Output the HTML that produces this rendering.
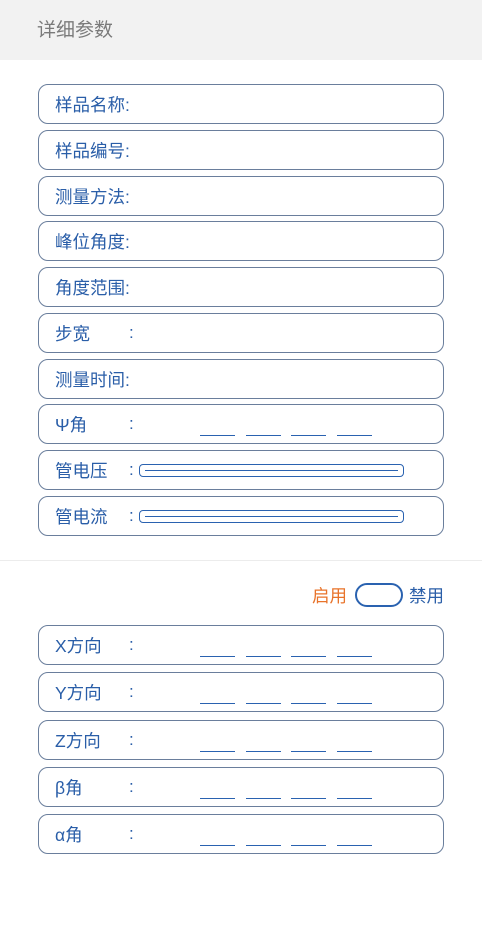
<!DOCTYPE html>
<html><head><meta charset="utf-8"><style>
*{margin:0;padding:0;box-sizing:border-box}
body{width:482px;height:951px;background:#fff;position:relative;overflow:hidden;font-family:"Liberation Sans","Noto Sans CJK SC",sans-serif}
.hd{position:absolute;left:0;top:0;width:482px;height:60px;background:#f2f2f2}
.hd span{position:absolute;left:37px;top:20px;font-size:19px;line-height:22px;color:#7a7a7a}
.row{position:absolute;left:38px;width:406px;height:40px;border:1px solid #6a7e9c;border-radius:10px}
.lb{position:absolute;left:16px;top:9px;font-size:17.5px;line-height:22px;color:#2a5ea8;white-space:nowrap}
.co{position:absolute;left:90px;top:8px;font-size:17px;line-height:22px;color:#2a5ea8}
.u{position:absolute;top:30px;width:35px;height:1px;background:#2a62b0}
.box{position:absolute;left:100px;top:13px;width:265px;height:13px;border:1.5px solid #2a62b0;border-radius:4px}
.box:after{content:"";position:absolute;left:5px;right:5px;top:4.5px;height:1px;background:#2a62b0}
.sep{position:absolute;left:0;top:560px;width:482px;height:1px;background:#ececec}
.t{position:absolute;top:585px;font-size:17.5px;line-height:22px}
</style></head><body>
<div class="hd"><span>详细参数</span></div>

<div class="row" style="top:84px"><span class="lb">样品名称:</span></div>
<div class="row" style="top:130px"><span class="lb">样品编号:</span></div>
<div class="row" style="top:176px"><span class="lb">测量方法:</span></div>
<div class="row" style="top:221px"><span class="lb">峰位角度:</span></div>
<div class="row" style="top:267px"><span class="lb">角度范围:</span></div>
<div class="row" style="top:313px"><span class="lb">步宽</span><span class="co">:</span></div>
<div class="row" style="top:359px"><span class="lb">测量时间:</span></div>
<div class="row" style="top:404px"><span class="lb">Ψ角</span><span class="co">:</span>
<i class="u" style="left:161px"></i><i class="u" style="left:207px"></i><i class="u" style="left:252px"></i><i class="u" style="left:298px"></i></div>
<div class="row" style="top:450px"><span class="lb">管电压</span><span class="co">:</span><div class="box"></div></div>
<div class="row" style="top:496px"><span class="lb">管电流</span><span class="co">:</span><div class="box"></div></div>

<div class="sep"></div>
<div class="t" style="left:312px;color:#e8732a">启用</div>
<div style="position:absolute;left:355px;top:583px;width:48px;height:24px;border:2px solid #2a62b0;border-radius:12px"></div>
<div class="t" style="left:409px;color:#2a5ea8">禁用</div>

<div class="row" style="top:625px"><span class="lb">X方向</span><span class="co">:</span>
<i class="u" style="left:161px"></i><i class="u" style="left:207px"></i><i class="u" style="left:252px"></i><i class="u" style="left:298px"></i></div>
<div class="row" style="top:672px"><span class="lb">Y方向</span><span class="co">:</span>
<i class="u" style="left:161px"></i><i class="u" style="left:207px"></i><i class="u" style="left:252px"></i><i class="u" style="left:298px"></i></div>
<div class="row" style="top:720px"><span class="lb">Z方向</span><span class="co">:</span>
<i class="u" style="left:161px"></i><i class="u" style="left:207px"></i><i class="u" style="left:252px"></i><i class="u" style="left:298px"></i></div>
<div class="row" style="top:767px"><span class="lb">β角</span><span class="co">:</span>
<i class="u" style="left:161px"></i><i class="u" style="left:207px"></i><i class="u" style="left:252px"></i><i class="u" style="left:298px"></i></div>
<div class="row" style="top:814px"><span class="lb">α角</span><span class="co">:</span>
<i class="u" style="left:161px"></i><i class="u" style="left:207px"></i><i class="u" style="left:252px"></i><i class="u" style="left:298px"></i></div>
</body></html>
